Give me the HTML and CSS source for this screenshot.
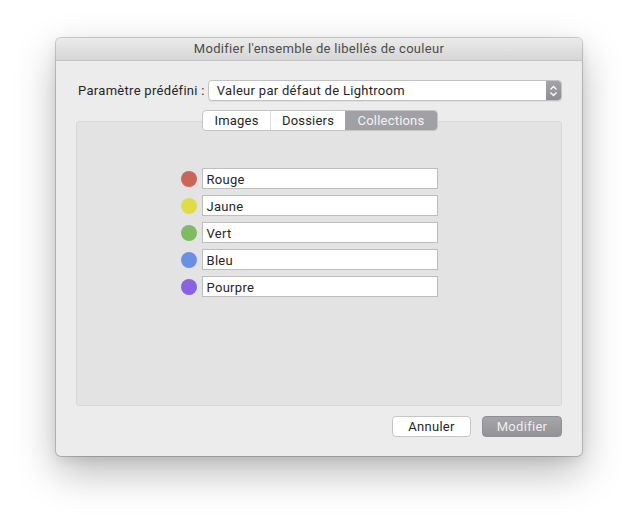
FILE: index.html
```html
<!DOCTYPE html>
<html lang="fr">
<head>
<meta charset="utf-8">
<link rel="stylesheet" href="styles.css">
</head>
<body>
<div class="window">
  <div class="titlebar">Modifier l'ensemble de libellés de couleur</div>
  <div class="content">
    <div class="preset">
      <span class="preset-label">Paramètre prédéfini :</span>
      <div class="popup">
        <span class="popup-text">Valeur par défaut de Lightroom</span>
        <span class="popup-arrows">
          <svg width="9" height="12" viewBox="0 0 9 12"><path d="M1.5 4.5 L4.5 1.5 L7.5 4.5 M1.5 7.5 L4.5 10.5 L7.5 7.5" fill="none" stroke="#fff" stroke-width="1.3"/></svg>
        </span>
      </div>
    </div>
    <div class="group">
      <div class="tabs">
        <span class="tab tab-images">Images</span>
        <span class="tab tab-dossiers">Dossiers</span>
        <span class="tab tab-active">Collections</span>
      </div>
      <div class="rows">
        <div class="row"><span class="dot red"></span><div class="field">Rouge</div></div>
        <div class="row"><span class="dot yellow"></span><div class="field">Jaune</div></div>
        <div class="row"><span class="dot green"></span><div class="field">Vert</div></div>
        <div class="row"><span class="dot blue"></span><div class="field">Bleu</div></div>
        <div class="row"><span class="dot purple"></span><div class="field">Pourpre</div></div>
      </div>
    </div>
    <div class="buttons">
      <button class="btn btn-cancel">Annuler</button>
      <button class="btn btn-ok">Modifier</button>
    </div>
  </div>
</div>
</body>
</html>
```
FILE: styles.css
```css
html, body {
  margin: 0;
  padding: 0;
  background: #ffffff;
  width: 638px;
  height: 530px;
  overflow: hidden;
}
body {
  font-family: "Roboto", "Noto Sans", sans-serif;
  font-size: 13px;
  letter-spacing: 0.3px;
  color: #262626;
  padding-top: 38px;
  padding-left: 56px;
  box-sizing: border-box;
}
.window {
  width: 526px;
  height: 418px;
  background: #ececec;
  border-radius: 5px;
  box-shadow: 0 0 0 1px rgba(0,0,0,0.18), 0 16px 40px rgba(0,0,0,0.28), 0 4px 12px rgba(0,0,0,0.08);
  overflow: hidden;
  display: flex;
  flex-direction: column;
}
.titlebar {
  height: 22px;
  line-height: 21px;
  text-align: center;
  color: #4d4d4d;
  font-size: 13px;
  background: linear-gradient(#ebebeb, #d6d6d6);
  border-bottom: 1px solid #c4c4c4;
}
.content {
  padding: 19px 20px 0 20px;
  display: flex;
  flex-direction: column;
}
.preset {
  display: flex;
  align-items: center;
  height: 21px;
  padding-left: 2px;
}
.preset-label {
  color: #262626;
  margin-right: 3px;
}
.popup {
  flex: 1;
  height: 19px;
  display: flex;
  align-items: center;
  background: #fff;
  border: 1px solid #c2c2c2;
  border-radius: 4px;
  overflow: hidden;
  box-shadow: 0 1px 0 rgba(0,0,0,0.05);
}
.popup-text {
  flex: 1;
  padding-left: 8px;
}
.popup-arrows {
  width: 15px;
  height: 100%;
  background: linear-gradient(#a4a4a8, #8d8d92);
  display: flex;
  align-items: center;
  justify-content: center;
}
.group {
  margin-top: 20px;
  height: 283px;
  background: #e3e3e3;
  border: 1px solid #d8d8d8;
  border-radius: 3px;
  position: relative;
  display: flex;
  flex-direction: column;
  align-items: center;
}
.tabs {
  position: absolute;
  top: -12px;
  left: 125px;
  display: flex;
  height: 19px;
  border: 1px solid #c4c4c4;
  border-radius: 4px;
  overflow: hidden;
  background: #fff;
}
.tab {
  line-height: 19px;
  color: #262626;
  text-align: center;
  letter-spacing: 0.2px;
}
.tab-images { width: 67px; border-right: 1px solid #dcdcdc; }
.tab-dossiers { width: 74px; }
.tab-active {
  width: 92px;
  background: #a0a0a5;
  color: #f4f4f4;
}
.rows {
  margin-top: 46px;
  margin-left: -20px;
  display: flex;
  flex-direction: column;
  gap: 6px;
}
.row {
  display: flex;
  align-items: center;
}
.dot {
  width: 16px;
  height: 16px;
  border-radius: 50%;
  margin-right: 5px;
}
.red { background: #c9665a; }
.yellow { background: #e0dc47; }
.green { background: #80bb63; }
.blue { background: #6a8fe4; }
.purple { background: #8962e3; }
.field {
  width: 230px;
  height: 19px;
  line-height: 21px;
  background: #fff;
  border: 1px solid #bdbdbd;
  padding-left: 4px;
  box-sizing: content-box;
  color: #262626;
}
.buttons {
  margin-top: 10px;
  display: flex;
  justify-content: flex-end;
  gap: 11px;
}
.btn {
  font-family: inherit;
  font-size: 13px;
  letter-spacing: 0.3px;
  height: 21px;
  border-radius: 4px;
  padding: 0;
  margin: 0;
}
.btn-cancel {
  width: 79px;
  background: #fff;
  border: 1px solid #c6c6c6;
  color: #262626;
}
.btn-ok {
  width: 80px;
  background: linear-gradient(#a5a5aa, #929297);
  border: 1px solid #8f8f94;
  color: #eeeeee;
}
```
